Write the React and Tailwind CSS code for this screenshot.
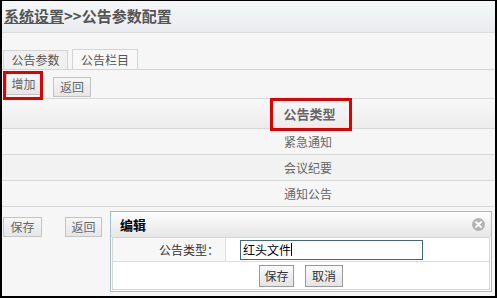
const font = { fontFamily: '"Noto Sans CJK SC", "Noto Sans", sans-serif' };

function Btn({ children, className = "" }) {
  return (
    <button
      className={
        "h-[20px] px-0 whitespace-nowrap flex items-center justify-center border border-[#c4c4c4] bg-gradient-to-b from-[#f7f7f7] to-[#e6e6e6] text-[12px] leading-none text-[#666] " +
        className
      }
    >
      {children}
    </button>
  );
}

const rows = ["紧急通知", "会议纪要", "通知公告"];

export default function App() {
  return (
    <div
      style={font}
      className="relative w-[497px] h-[298px] overflow-hidden border-t border-l-2 border-r-2 border-b-2 border-black bg-[#f6f6f6]"
    >
      {/* title */}
      <div className="h-[32px] flex items-center px-[2px] border-b border-[#dcdcdc] bg-gradient-to-b from-[#f5f7f8] to-[#e9ecee]">
        <span className="text-[15px] font-bold text-[#555]">
          <span className="underline">系统设置</span>&gt;&gt;公告参数配置
        </span>
      </div>

      {/* tabs */}
      <div className="mt-[17px] h-[20px] flex items-end gap-[4px] pl-[1px] border-b border-[#d4d4d4]">
        <div className="h-[19px] w-[65px] flex items-center justify-center border border-b-0 border-[#d4d4d4] bg-[#f0f0f0] text-[12px] text-[#555]">
          公告参数
        </div>
        <div className="h-[20px] w-[66px] flex items-center justify-center border border-b-0 border-[#d4d4d4] bg-[#f8f8f8] text-[12px] text-[#555]">
          公告栏目
        </div>
      </div>

      {/* toolbar */}
      <div className="h-[29px] flex items-center gap-[12px] pl-[4px] border-b border-[#d8d8d8]">
        <Btn className="h-[22px] w-[35px]">增加</Btn>
        <Btn className="w-[38px] mt-[5px]">返回</Btn>
      </div>

      {/* table */}
      <div className="h-[30px] flex items-center justify-center pl-[122px] border-b border-[#d8d8d8] bg-gradient-to-b from-[#f8f8f8] to-[#ececec]">
        <span className="text-[13px] font-bold text-[#666]">公告类型</span>
      </div>
      {rows.map((r, i) => (
        <div
          key={r}
          className={
            "h-[26px] flex items-center justify-center pl-[119px] border-b border-[#d8d8d8] text-[12px] text-[#666] " +
            (i === 1 ? "bg-[#f2f2f2]" : "bg-[#f6f6f6]")
          }
        >
          {r}
        </div>
      ))}

      {/* bottom buttons */}
      <div className="mt-[10px] flex gap-[23px] pl-[1px]">
        <Btn className="h-[18px] w-[39px]">保存</Btn>
        <Btn className="h-[18px] w-[37px]">返回</Btn>
      </div>

      {/* annotation boxes */}
      <div className="absolute left-[1px] top-[70px] w-[40px] h-[29px] border-[3px] border-[#e00000]" />
      <div className="absolute left-[268px] top-[97px] w-[82px] h-[33px] border-[3px] border-[#e00000]" />

      {/* dialog */}
      <div className="absolute left-[108px] top-[210px] w-[382px] h-[81px] border border-[#9cc0cc] bg-white flex flex-col">
        <div className="h-[25px] flex items-center justify-between px-[9px] bg-gradient-to-b from-[#fdfdfd] to-[#e6e6e6]">
          <span className="text-[13px] font-bold text-black">编辑</span>
          <svg width="13" height="13" viewBox="0 0 13 13" className="mr-[-3px]">
            <circle cx="6.5" cy="6.5" r="6.5" fill="#b3b3b3" />
            <path d="M4 4 L9 9 M9 4 L4 9" stroke="#fff" strokeWidth="1.8" strokeLinecap="round" />
          </svg>
        </div>
        <div className="mx-[1px] mb-[1px] flex-1 border border-[#d6d6d6] flex flex-col">
          <div className="h-[24px] flex border-b border-[#dcdcdc]">
            <div className="w-[113px] flex items-center justify-end pr-[6px] bg-[#f7f7f7] border-r border-[#e0e0e0] text-[12px] text-[#333]">
              公告类型：
            </div>
            <div className="flex-1 flex items-center pl-[14px] bg-white">
              <div className="w-[183px] h-[20px] border border-[#3f6b78] flex items-center px-[2px] text-[12px] text-black">
                红头文件<span className="w-[1px] h-[13px] bg-black" />
              </div>
            </div>
          </div>
          <div className="flex-1 flex items-center justify-center gap-[11px] bg-white">
            <button className="h-[22px] w-[35px] border border-[#9a9a9a] bg-gradient-to-b from-[#fafafa] to-[#e4e4e4] text-[12px] leading-none text-[#333]">
              保存
            </button>
            <button className="h-[22px] w-[38px] border border-[#9a9a9a] bg-gradient-to-b from-[#fafafa] to-[#e4e4e4] text-[12px] leading-none text-[#333]">
              取消
            </button>
          </div>
        </div>
      </div>
    </div>
  );
}
